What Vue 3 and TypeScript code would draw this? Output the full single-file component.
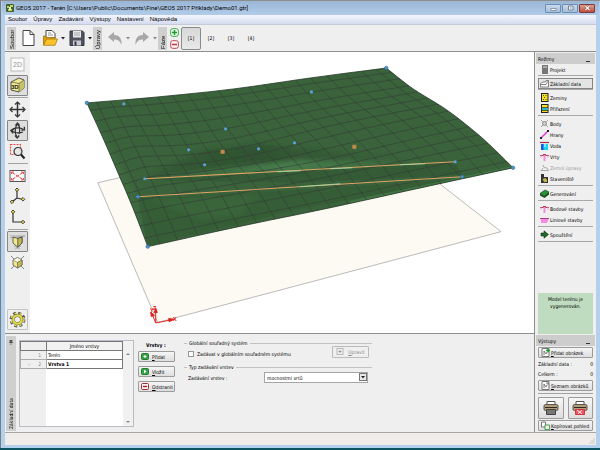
<script setup lang="ts">
import { ref } from 'vue'

type Pt = [number, number]
interface Mode { label: string; icon: string; disabled?: boolean }

const menu = ['Soubor', 'Úpravy', 'Zadávání', 'Výstupy', 'Nastavení', 'Nápověda']
const stages = ['[1]', '[2]', '[3]', '[4]']
const activeStage = ref('[1]')
const activeMode = ref('Základní data')
const globalSystem = ref(false)
const inputKind = ref('mocnostmi vrtů')

const modeGroups: Mode[][] = [
  [{ label: 'Projekt', icon: 'project' }],
  [{ label: 'Základní data', icon: 'data' }],
  [{ label: 'Zeminy', icon: 'soils' }, { label: 'Přiřazení', icon: 'assign' }],
  [
    { label: 'Body', icon: 'points' },
    { label: 'Hrany', icon: 'edges' },
    { label: 'Voda', icon: 'water' },
    { label: 'Vrty', icon: 'bores' },
    { label: 'Zemní úpravy', icon: 'earth', disabled: true },
    { label: 'Staveniště', icon: 'site' },
  ],
  [{ label: 'Generování', icon: 'generate' }],
  [{ label: 'Bodové stavby', icon: 'bores' }, { label: 'Liniové stavby', icon: 'lines' }],
  [{ label: 'Spouštění', icon: 'run' }],
]

const layers = [
  { n: 1, name: 'Terén', current: false },
  { n: 2, name: 'Vrstva 1', current: true },
]

// Terrain surface: a Coons patch over four edge curves with a raised shelf on the left
const COLS = 20
const ROWS = 14
const topEdge: Pt[] = [[86, 103], [157, 97], [233, 89], [310, 78], [386, 68]]
const bottomEdge: Pt[] = [[147, 247], [238, 227], [330, 208], [421, 188], [513, 168]]
const leftEdge: Pt[] = [[86, 103], [102, 138], [118, 175], [132, 208], [147, 247]]
const rightEdge: Pt[] = [[386, 68], [413, 89], [448, 111], [483, 139], [513, 168]]

function along(edge: Pt[], t: number): Pt {
  const s = Math.min(t, 0.99999) * (edge.length - 1)
  const i = Math.floor(s)
  const f = s - i
  const p = (k: number): Pt => edge[Math.max(0, Math.min(edge.length - 1, k))]
  const blend = (a: number, b: number, c: number, d: number) =>
    0.5 * (2 * b + (c - a) * f + (2 * a - 5 * b + 4 * c - d) * f * f + (3 * b - a - 3 * c + d) * f * f * f)
  return [
    blend(p(i - 1)[0], p(i)[0], p(i + 1)[0], p(i + 2)[0]),
    blend(p(i - 1)[1], p(i)[1], p(i + 1)[1], p(i + 2)[1]),
  ]
}

function surface(u: number, v: number): Pt {
  const t = along(topEdge, u)
  const b = along(bottomEdge, u)
  const l = along(leftEdge, v)
  const r = along(rightEdge, v)
  const at = (k: 0 | 1) =>
    (1 - v) * t[k] + v * b[k] + (1 - u) * l[k] + u * r[k] -
    ((1 - u) * (1 - v) * topEdge[0][k] + u * (1 - v) * topEdge[4][k] +
      (1 - u) * v * bottomEdge[0][k] + u * v * bottomEdge[4][k])
  const hump = Math.exp(-(((u - 0.36) / 0.2) ** 2) - ((v - 0.42) / 0.2) ** 2)
  const shelf = Math.exp(-(((u - 0.1) / 0.08) ** 2) - ((v - 0.4) / 0.28) ** 2) * Math.min(1, u * 12)
  const dip = Math.exp(-(((u - 0.62) / 0.25) ** 2) - ((v - 0.64) / 0.12) ** 2)
  return [at(0) + dip * 2, at(1) + hump * 5 - shelf * 4 + dip * 3]
}

const toPath = (pts: Pt[]) => 'M' + pts.map(p => p[0].toFixed(1) + ' ' + p[1].toFixed(1)).join('L')
const steps = (n: number) => Array.from({ length: n + 1 }, (_, i) => i / n)

const meshLines: string[] = []
for (let c = 1; c < COLS; c++) meshLines.push(toPath(steps(40).map(v => surface(c / COLS, v))))
for (let r = 1; r < ROWS; r++) meshLines.push(toPath(steps(40).map(u => surface(u, r / ROWS))))
const mesh = meshLines.join('')

const outline = toPath([
  ...steps(24).map(t => along(topEdge, t)),
  ...steps(24).map(t => along(rightEdge, t)),
  ...steps(24).map(t => along(bottomEdge, 1 - t)),
  ...steps(24).map(t => along(leftEdge, 1 - t)),
]) + 'Z'

const corners: Pt[] = [[86, 103], [386, 68], [513, 168], [147, 247], [462, 177], [137, 197]]
const points: Pt[] = [
  [123, 104], [225, 129], [188, 150], [258, 149], [294, 143], [204, 165],
  [144, 179], [311, 92], [455, 162],
]
const bores: Pt[] = [[222, 152], [354, 147]]
</script>

<template>
  <div class="window">
    <header class="title">
      <svg class="app-icon" viewBox="0 0 8 8"><rect width="8" height="8" rx="1" fill="#46602e" /><path d="M1 2h2v2H1zM4 1h3v2H4zM2 5h4v2H2z" fill="#b6d66c" /><path d="M3 3h2v3H3z" fill="#e9f2c4" /></svg>
      <h1>GEO5 2017 - Terén [C:\Users\Public\Documents\Fine\GEO5 2017 Příklady\Demo01.gtr]</h1>
      <div class="controls">
        <button class="ctl" aria-label="Minimalizovat"><svg viewBox="0 0 15 8"><path d="M5 4.500h5v2H5z" fill="#fff" stroke="#5b6c80" stroke-width=".6" /></svg></button>
        <button class="ctl" aria-label="Maximalizovat"><svg viewBox="0 0 15 8"><path d="M5.500 2h4.500v4H5.500z" fill="#fff" stroke="#5b6c80" stroke-width=".8" /><path d="M7 3.500h1.500v1H7z" fill="#5b6c80" /></svg></button>
        <button class="ctl close" aria-label="Zavřít"><svg viewBox="0 0 15 8"><path d="M5.500 2l4 4M9.500 2l-4 4" stroke="#6c3a36" stroke-width="2.200" /><path d="M5.500 2l4 4M9.500 2l-4 4" stroke="#fff" stroke-width="1.300" /></svg></button>
      </div>
    </header>

    <nav class="menu">
      <a v-for="m in menu" :key="m" href="#">{{ m }}</a>
    </nav>

    <div class="toolbar">
      <span class="grip"><span>Soubor</span></span>
      <button class="tb wide" aria-label="Nový"><svg viewBox="0 0 16 18" width="16" height="18"><path d="M3 1.500h7l4 4v11H3z" fill="#fff" stroke="#444" /><path d="M10 1.500v4h4" fill="none" stroke="#444" /></svg></button>
      <button class="tb" aria-label="Otevřít"><svg viewBox="0 0 16 18" width="16" height="18"><path d="M4 9V1.500h6l3 3V9" fill="#fff" stroke="#444" /><path d="M6 4h3M6 6h5" stroke="#777" stroke-width=".8" /><path d="M1.500 16V7h2l1 1.500H13V10" fill="#e0a010" stroke="#9b7410" stroke-width=".8" /><path d="M1.500 16.300L4.500 10h11L13 16.300z" fill="#fcc32c" stroke="#a87c10" stroke-width=".8" /></svg></button>
      <button class="caret" aria-label="Naposledy otevřené"><svg viewBox="0 0 4 3" width="4" height="3"><path d="M0 0h4L2 2.500z" fill="#222" /></svg></button>
      <button class="tb" aria-label="Uložit"><svg viewBox="0 0 16 18" width="16" height="18"><path d="M1 2h12.500L15 3.500V16.500H1z" fill="#50525e" stroke="#33353f" /><path d="M4 2h8v6.500H4z" fill="#e8e8ec" /><path d="M5 4h6M5 6h6" stroke="#888" stroke-width=".7" /><path d="M4 11.500h8v5H4z" fill="#c9cad2" /><path d="M5.500 12.500h2v4h-2z" fill="#33353f" /></svg></button>
      <button class="caret" aria-label="Uložit jako"><svg viewBox="0 0 4 3" width="4" height="3"><path d="M0 0h4L2 2.500z" fill="#222" /></svg></button>
      <span class="grip"><span>Úpravy</span></span>
      <button class="tb undo" aria-label="Zpět"><svg viewBox="0 0 16 18" width="16" height="18"><path d="M1 8l6-5v3c5 0 8 3 7.500 10C13 12 11 10.500 7 10.500V13z" fill="#a7a7a7" /></svg></button>
      <button class="caret" aria-label="Historie zpět"><svg viewBox="0 0 4 3" width="4" height="3"><path d="M0 0h4L2 2.500z" fill="#888" /></svg></button>
      <button class="tb" aria-label="Znovu"><svg viewBox="0 0 16 18" width="16" height="18"><path d="M15 8L9 3v3C4 6 1 9 1.500 16 3 12 5 10.500 9 10.500V13z" fill="#a7a7a7" /></svg></button>
      <button class="caret" aria-label="Historie znovu"><svg viewBox="0 0 4 3" width="4" height="3"><path d="M0 0h4L2 2.500z" fill="#888" /></svg></button>
      <span class="grip"><span>Fáze</span></span>
      <div class="stage-edit">
        <button aria-label="Přidat fázi"><svg viewBox="0 0 9 9" width="9" height="9"><rect x=".7" y=".7" width="7.600" height="7.600" rx="2" fill="#f4fff4" stroke="#35a344" /><path d="M4.500 2v5M2 4.500h5" stroke="#1f9a32" stroke-width="1.500" /></svg></button>
        <button aria-label="Odebrat fázi"><svg viewBox="0 0 9 9" width="9" height="9"><rect x=".7" y=".7" width="7.600" height="7.600" rx="2" fill="#fff2f2" stroke="#b94a50" /><path d="M2 4.500h5" stroke="#b23a42" stroke-width="1.500" /></svg></button>
      </div>
      <button v-for="s in stages" :key="s" class="stage" :class="{ on: s === activeStage }" @click="activeStage = s">{{ s }}</button>
    </div>

    <div class="body">
      <div class="work">
        <main class="main">
          <div class="tools">
            <button class="tool" aria-label="2D"><svg viewBox="0 0 19 19"><rect x="3" y="3" width="13" height="13" fill="#fafafa" stroke="#bbb" /><text x="5" y="12" class="t2d">2D</text></svg></button>
            <button class="tool on" aria-label="3D"><svg viewBox="0 0 19 19"><path d="M3 6l8-4 5 2v8l-5 4-8-2z" fill="#efe88c" stroke="#444" stroke-width=".9" /><path d="M11 7.500L16 4v8l-5 4z" fill="#c9c060" /><path d="M3 6l8 1.500 5-3.500M11 7.500V16" fill="none" stroke="#555" stroke-width=".7" /><text x="3" y="13" class="t3d">3D</text></svg></button>
            <hr>
            <button class="tool" aria-label="Posun"><svg viewBox="0 0 19 19" class="line"><path d="M9.500 3v13M3 9.500h13" stroke-width="1.500" /><path d="M7 4.500l2.500-2.500L12 4.500M7 14.500l2.500 2.500 2.500-2.500M4.500 7L2 9.500 4.500 12M14.500 7L17 9.500 14.500 12" /></svg></button>
            <button class="tool on" aria-label="Otáčení"><svg viewBox="0 0 19 19" class="line"><path d="M9 16C6.500 13 6.500 6 9.500 3c2.500 2 2.800 7 1.500 10" /><path d="M15.500 8.500C12 6 6 6.500 3 9.500c2.500 2.500 8 3 12 1.500" /><path d="M7 14.500L9.200 17l2-2.500M13.500 9l3-.2-.2-3M7.500 4.500l2-2.500 2 2.500M5 12.500l-2-3 3-1" stroke-width="1.300" /></svg></button>
            <button class="tool" aria-label="Výřez"><svg viewBox="0 0 19 19"><path d="M2.500 2.500h10v10h-10z" fill="none" stroke="#ef4b4b" stroke-width="1.200" stroke-dasharray="2 1" /><circle cx="10" cy="9.500" r="4" fill="#e4e6e6" fill-opacity=".8" stroke="#333" stroke-width="1.200" /><path d="M13 12.500l3.500 4" stroke="#222" stroke-width="2" /></svg></button>
            <hr>
            <button class="tool" aria-label="Zobrazit vše"><svg viewBox="0 0 19 19"><rect x="2" y="4.500" width="15" height="11" fill="#fff" stroke="#555" /><path d="M4 6.500l11 7M15 6.500l-11 7" stroke="#f04a4a" stroke-dasharray="3.500 1" /><path d="M3.500 8V6H6M13 6h2.500v2M3.500 12v2H6M13 14h2.500v-2" fill="none" stroke="#f04a4a" /></svg></button>
            <button class="tool" aria-label="Axonometrie"><svg viewBox="0 0 19 19" class="line nodes"><path d="M9 3v8L4 15M9 11l6 1.500" /><path d="M9 1l1.800 1.800L9 4.600 7.200 2.800zM4 13l1.800 1.800L4 16.600 2.200 14.800zM15 10.500l1.800 1.800L15 14.100l-1.800-1.800z" /></svg></button>
            <button class="tool" aria-label="Půdorys"><svg viewBox="0 0 19 19" class="line nodes"><path d="M5 4v10h10" /><path d="M5 2l1.800 1.800L5 5.600 3.200 3.800zM15 12.200l1.800 1.800-1.800 1.800-1.800-1.800z" /></svg></button>
            <hr>
            <button class="tool on" aria-label="Perspektiva"><svg viewBox="0 0 19 19"><path d="M2 4h15M6 14l6 3M13 14l-6 3M2 6l15-2" stroke="#999" stroke-width=".7" /><path d="M5 5l5 1.500 4-1.500v6l-4.500 4L5 11z" fill="#efe88c" stroke="#444" stroke-width=".8" /><path d="M9.800 6.500V15L14 11V5z" fill="#c3ba55" stroke="#444" stroke-width=".8" /></svg></button>
            <button class="tool" aria-label="Rovnoběžné promítání"><svg viewBox="0 0 19 19"><path d="M3 3l13 13M16 3L3 16" stroke="#777" stroke-width=".9" /><path d="M9.500 4.500L14 7v5l-4.500 3L5 12V7z" fill="#efe88c" stroke="#555" stroke-width=".8" /><path d="M5 7l4.500 2.500L14 7 9.500 4.500z" fill="#fbf8d8" stroke="#777" stroke-width=".6" /><path d="M9.500 9.500V15L14 12V7z" fill="#c3ba55" stroke="#555" stroke-width=".6" /></svg></button>
            <button class="tool boxed" aria-label="Nastavení zobrazení"><svg viewBox="0 0 19 19"><circle cx="9.500" cy="9.500" r="6.400" fill="none" stroke="#555" stroke-width="3" stroke-dasharray="2.900 2.127" /><circle cx="9.500" cy="9.500" r="6.200" fill="none" stroke="#e3da48" stroke-width="1.800" stroke-dasharray="2 3.027" stroke-dashoffset="-.4" /><circle cx="9.500" cy="9.500" r="4.200" fill="#f0f0f0" stroke="#666" stroke-width="3.200" /><circle cx="9.500" cy="9.500" r="4.200" fill="none" stroke="#e3da48" stroke-width="2.200" /></svg></button>
          </div>

          <svg class="scene" viewBox="29 52 505 282" preserveAspectRatio="xMinYMin meet" role="img" aria-label="Model terénu">
            <defs>
              <clipPath id="ground"><path :d="outline" /></clipPath>
              <linearGradient id="dark" x1="0" x2="1"><stop offset="0" stop-color="#2a4a2b" stop-opacity=".4" /><stop offset=".4" stop-color="#2a4a2b" stop-opacity=".6" /><stop offset="1" stop-color="#2a4a2b" stop-opacity="0" /></linearGradient>
              <linearGradient id="light" x1="0" x2="1"><stop offset="0" stop-color="#4b8350" stop-opacity="0" /><stop offset=".45" stop-color="#4b8350" stop-opacity=".8" /><stop offset="1" stop-color="#4b8350" stop-opacity="0" /></linearGradient>
              <filter id="soft" x="-20%" y="-50%" width="140%" height="200%"><feGaussianBlur stdDeviation="2" /></filter>
            </defs>
            <path d="M97 183L360 122 501 232 157 323Z" fill="#fdf9f3" stroke="#aaa" stroke-width=".8" />
            <path :d="outline" fill="#3a633b" />
            <g clip-path="url(#ground)">
              <path d="M86 103L137 197 147 247 130 225 80 110Z" fill="#467447" opacity=".4" filter="url(#soft)" />
              <path d="M144 177L205 150 260 144 340 152 420 161 300 163 210 170Z" fill="url(#dark)" filter="url(#soft)" />
              <path d="M150 178L230 167 300 160 400 162 450 162 300 171Z" fill="url(#light)" filter="url(#soft)" />
              <path d="M144 180L455 163 462 175 300 183Z" fill="#2d5430" opacity=".5" />
              <path d="M137 199L300 190 462 179 300 209 147 246Z" fill="#315a32" opacity=".5" />
              <path d="M150 200L260 195 240 215 200 220Z" fill="#437346" opacity=".35" filter="url(#soft)" />
              <path d="M350 201L513 166v3L350 206z" fill="#4a874e" opacity=".5" />
              <path :d="mesh" fill="none" stroke="#353b37" stroke-opacity=".85" stroke-width=".7" />
            </g>
            <path :d="outline" fill="none" stroke="#26382a" stroke-width=".8" />
            <path d="M144 179L455 162M137 197L462 177" stroke="#dfa466" stroke-width="1.100" />
            <path d="M277 172L300 171M330 169L352 168M400 165L425 164M300 187L340 184" stroke="#a5ddb0" stroke-width=".8" />
            <rect v-for="(p, i) in bores" :key="'b' + i" :x="p[0] - 2" :y="p[1] - 2" width="4" height="4" fill="#c08a4d" />
            <circle v-for="(p, i) in points" :key="'p' + i" :cx="p[0]" :cy="p[1]" r="1.600" fill="#57a3d6" />
            <circle v-for="(p, i) in corners" :key="'c' + i" :cx="p[0]" :cy="p[1]" r="1.800" fill="#4c94c6" stroke="#285a86" stroke-width=".5" />
            <g class="axes">
              <path d="M155 323.500V311M155 323.500L170 320.500M155 323.500L151.500 315" />
              <path d="M153.500 313L155 308.500 156.500 313zM168 319l5 1-4.500 2.200zM150.500 317L150 312.500 153.500 316z" fill="#e0201c" />
              <text x="172" y="322">X</text><text x="149" y="313">Y</text><text x="152" y="311">Z</text>
            </g>
          </svg>
        </main>

        <section class="panel">
          <div class="side-grip"><svg viewBox="0 0 4 5" width="4" height="5"><path d="M1 0h2v2.500H1zM0 2.500h4M2 2.500V5" fill="#555" stroke="#555" stroke-width=".7" /></svg><span>Základní data</span></div>
          <div class="grid-box">
            <table>
              <thead><tr><th class="num"></th><th>Jméno vrstvy</th></tr></thead>
              <tbody>
                <tr v-for="l in layers" :key="l.n" :class="{ current: l.current }">
                  <td class="num"><i>{{ l.current ? '›' : '' }}</i>{{ l.n }}</td><td>{{ l.name }}</td>
                </tr>
              </tbody>
            </table>
            <div class="scroll">
              <svg viewBox="0 0 4 2" width="4" height="2"><path d="M0 2h4L2 0z" fill="#888" /></svg>
              <svg viewBox="0 0 4 2" width="4" height="2"><path d="M0 0h4L2 2z" fill="#888" /></svg>
            </div>
          </div>
          <div class="layer-actions">
            <strong>Vrstvy :</strong>
            <button class="btn"><svg viewBox="0 0 8 7"><rect x=".5" y=".5" width="7" height="6" rx="1" fill="#35a344" stroke="#237a30" /><path d="M4 2v3M2.500 3.500h3" stroke="#fff" /></svg><span><u>P</u>řidat</span></button>
            <button class="btn"><svg viewBox="0 0 8 7"><rect x=".5" y=".5" width="7" height="6" rx="1" fill="#35a344" stroke="#237a30" /><path d="M3 1.500l2.500 2L3 5.500z" fill="#fff" /></svg><span><u>V</u>ložit</span></button>
            <button class="btn"><svg viewBox="0 0 8 7"><rect x=".5" y=".5" width="7" height="6" rx="1" fill="#fbeeee" stroke="#9c2f38" /><path d="M2 3.500h4" stroke="#9c1f2a" stroke-width="1.300" /></svg><span><u>O</u>dstranit</span></button>
          </div>
          <form class="settings" @submit.prevent>
            <fieldset>
              <legend>Globální souřadný systém</legend>
              <div class="line-row">
                <input id="glob" v-model="globalSystem" type="checkbox">
                <label for="glob">Zadávat v globálním souřadném systému</label>
                <button type="button" class="btn edit" disabled><svg viewBox="0 0 8 7"><rect x="1" y=".5" width="6" height="6" fill="#f4f4f4" stroke="#aaa" stroke-width=".8" /><path d="M4 2v3M2.500 3.500h3" stroke="#888" stroke-width=".8" /></svg><span><u>U</u>pravit</span></button>
              </div>
            </fieldset>
            <fieldset>
              <legend>Typ zadávání vrstev</legend>
              <div class="line-row">
                <label for="kind" class="kind-label">Zadávání vrstev :</label>
                <div class="select">
                  <select id="kind" v-model="inputKind"><option>mocnostmi vrtů</option><option>body</option></select>
                  <svg viewBox="0 0 8 8" width="8" height="8"><rect x=".5" y=".5" width="7" height="7" fill="#e8e8e8" stroke="#777" /><path d="M2 3h4L4 5.500z" fill="#222" /></svg>
                </div>
              </div>
            </fieldset>
          </form>
        </section>
      </div>

      <aside class="sidebar">
        <h2>Režimy<i></i></h2>
        <div class="modes">
          <div v-for="(g, gi) in modeGroups" :key="gi" class="group">
            <button v-for="m in g" :key="m.label" class="mode" :class="{ on: m.label === activeMode }" :disabled="m.disabled" @click="activeMode = m.label">
              <svg viewBox="0 0 9 9" width="9" height="9">
                <g v-if="m.icon === 'project'"><rect x="2" width="6" height="9" fill="#777" /><path d="M3 2h4" stroke="#ddd" /></g>
                <g v-else-if="m.icon === 'data'" fill="#fff" stroke="#555" stroke-width=".7"><path d="M.5 8V4.500L3 3h2.500L6 1.500h2.500V8z" /><path d="M1 5.500h5L8 2" fill="none" /></g>
                <g v-else-if="m.icon === 'soils'"><rect x="1.500" y=".5" width="6.500" height="8" fill="#f6e02a" stroke="#222" /><path d="M3 2.500h1M5.500 2.500h1M4 4.500h1M3 6.500h1M5.500 6.500h1" stroke="#554c00" /></g>
                <g v-else-if="m.icon === 'assign'"><rect x="1.500" y=".5" width="6.500" height="8" fill="#f6e02a" stroke="#222" /><path d="M2 4h6v2H2z" fill="#2fb6c4" /><path d="M2 3.500h6M2 6.500h6" stroke="#222" stroke-width=".7" /></g>
                <g v-else-if="m.icon === 'points'"><path d="M1 1l7 7M8 1L1 8" stroke="#888" stroke-width=".7" /><circle cx="4.500" cy="4.500" r="2" fill="#ccc" stroke="#777" stroke-width=".7" /></g>
                <g v-else-if="m.icon === 'edges'"><path d="M1 8l7-7" stroke="#e531d4" stroke-width="1.500" /><path d="M0 7h2v2H0zM7 0h2v2H7z" fill="#222" /></g>
                <g v-else-if="m.icon === 'water'"><path d="M1 3h7v6H1z" fill="#16d3f2" /><path d="M1 3h2.500v6H1z" fill="#1d55e0" /><path d="M0 1.500h9" stroke="#b32844" stroke-width="1.200" /><path d="M5 3v3" stroke="#fff" /></g>
                <g v-else-if="m.icon === 'bores'"><path d="M0 3.500h9" stroke="#b03c5c" /><path d="M3.500 2.500h2V9h-2z" fill="#f48ad8" /><path d="M1 3v3M8 3v3" stroke="#dc9abc" stroke-width=".7" /><path d="M3 2.500h3" stroke="#b03c5c" /></g>
                <g v-else-if="m.icon === 'earth'" fill="none" stroke="#aaa"><path d="M1 7.500h7.500L7 5 4 4.500 3 2M1 7.500L3 5" /></g>
                <g v-else-if="m.icon === 'site'"><path d="M1 0h3v3h4v6H1z" fill="#333" /><path d="M2.500 5l3-1 1.500 2v2H4z" fill="#c7b84a" /></g>
                <g v-else-if="m.icon === 'generate'"><path d="M0 4.500L5 1l4 2-4 4z" fill="#2d9138" stroke="#14501c" stroke-width=".7" /><path d="M0 4.500v2L4.500 9 9 5.500V3L4.500 7z" fill="#174f1e" /></g>
                <g v-else-if="m.icon === 'lines'"><path d="M1 3h8L7 8H1z" fill="#f78be4" /><path d="M0 3.500h9" stroke="#b03c7c" /></g>
                <path v-else d="M1 3h3V.8L8.500 4.500 4 8.200V6H1z" fill="#1f6b27" stroke="#111" stroke-width=".5" />
              </svg>
              <span>{{ m.label }}</span>
            </button>
          </div>
        </div>
        <p class="message">Model terénu je vygenerován.</p>
        <h2>Výstupy<i></i></h2>
        <div class="outputs">
          <button class="btn out"><svg viewBox="0 0 9 9"><path d="M1 .5h7v8H1z" fill="#f8f8f8" stroke="#777" /><path d="M3 7V3l2 3 1-2" fill="none" stroke="#555" stroke-width=".7" /><path d="M5 2.500h4M7 .5v4" stroke="#1f9a32" stroke-width="1.300" /></svg><span><u>P</u>řidat obrázek</span></button>
          <dl><dt>Základní data :</dt><dd>0</dd><dt>Celkem :</dt><dd>0</dd></dl>
          <button class="btn out"><svg viewBox="0 0 9 9"><path d="M1 .5h7v8H1z" fill="#f8f8f8" stroke="#777" /><path d="M3 7V3l2 3 1-2M5 2h3M6 3h2" fill="none" stroke="#555" stroke-width=".7" /></svg><span><u>S</u>eznam obrázků</span></button>
          <hr>
          <div class="prints">
            <button class="btn" aria-label="Tisk"><svg viewBox="0 0 16 16" width="16" height="16"><path d="M4 6V1.500h8V6" fill="#fff" stroke="#555" /><rect x="1" y="4.500" width="14" height="6" rx="1.500" fill="#b39c7a" stroke="#5c5448" /><path d="M2 7.500h12" stroke="#2e2b27" /><path d="M3.500 9.500h9v5h-9z" fill="#777" stroke="#444" /></svg></button>
            <button class="btn" aria-label="Tisk do PDF"><svg viewBox="0 0 16 16" width="16" height="16"><path d="M4 6V1.500h8V6" fill="#fff" stroke="#555" /><rect x="1" y="4.500" width="14" height="6" rx="1.500" fill="#b39c7a" stroke="#5c5448" /><path d="M2 7.500h12" stroke="#2e2b27" /><path d="M3.500 9.500h9v5h-9z" fill="#ee5560" stroke="#d63440" /><path d="M5 10l5 4M6 13.500l4-3" stroke="#fff" stroke-width=".9" /></svg></button>
          </div>
          <button class="btn out"><svg viewBox="0 0 9 9"><path d="M.5 1h4v5h-4z" fill="#fff" stroke="#555" stroke-width=".8" /><path d="M4 4h4.500v4.500H4z" fill="#e8f4e8" stroke="#2c8a3b" stroke-width=".8" /></svg><span><u>K</u>opírovat pohled</span></button>
        </div>
      </aside>
    </div>

    <footer class="status"><svg viewBox="0 0 6 6" width="6" height="6"><path d="M5 1v0M5 3v0M3 3v0M5 5v0M3 5v0M1 5v0" stroke="#aaa" stroke-linecap="square" /></svg></footer>
  </div>
</template>

<style>
body { margin: 0; background: #0d5462; }
</style>

<style scoped>
* { box-sizing: border-box; }
.window {
  display: flex;
  flex-direction: column;
  min-height: calc(100vh - 2px);
  padding: 0 4px 3px;
  border-top: 1px solid #8d8d8d;
  border-left: 1px solid #757d86;
  background: #b5d0ec;
  font: 5px/8px "DejaVu Sans Condensed", "DejaVu Sans", Tahoma, sans-serif;
  color: #000;
}
button, select, input { font: inherit; color: inherit; }
button { display: flex; align-items: center; justify-content: center; padding: 0; border: 0; background: none; }
button svg { flex: none; }

.title { display: flex; align-items: center; height: 14px; margin: 0 -3px; padding: 0 4px; background: linear-gradient(#9ab6d5, #b2cce8); }
.app-icon { width: 8px; height: 8px; margin-right: 2px; }
h1 { flex: 1; margin: 0; font: 6px/8px Roboto, "Liberation Sans", sans-serif; white-space: nowrap; }
.controls { display: flex; gap: 1px; }
.ctl { width: 16px; height: 9px; border: 1px solid #6f8db0; border-radius: 1px; background: linear-gradient(#c8daee, #a4bedb); }
.ctl svg { width: 15px; height: 8px; }
.close { border-color: #7c3b3a; background: linear-gradient(#dfa191, #c14a37); }

.menu { display: flex; gap: 6px; height: 10px; padding: 0 3px; border-bottom: 1px solid #c4cadc; background: linear-gradient(#f4f6fc, #d5dcf0); font: 6px/9px "Liberation Sans", Arial, sans-serif; }
.menu a { color: inherit; text-decoration: none; }

.toolbar { display: flex; align-items: center; height: 27px; padding-left: 2px; border-bottom: 1px solid #8f8f8f; background: #efefef; }
.grip { display: flex; align-items: flex-start; justify-content: center; width: 9px; height: 23px; background: #cfcfcf; }
.grip span { writing-mode: vertical-rl; transform: rotate(180deg); width: 8px; height: 23px; padding-top: 1px; text-align: left; font: 6px/8px "Liberation Sans", Arial, sans-serif; }
.tb { width: 21px; height: 23px; }
.tb.wide { width: 23px; }
.tb svg { width: 16px; height: 18px; }
.caret { width: 6px; height: 20px; }
.undo { margin-left: 2px; }
.stage-edit { display: flex; flex-direction: column; gap: 3px; width: 14px; align-items: center; }
.stage { width: 20px; height: 23px; border: 1px solid transparent; border-radius: 2px; }
.stage.on { border-color: #8a8a8a; background: linear-gradient(#d8d8d8, #e9e9e9); }

.body { display: flex; flex: 1; min-height: 0; background: #efefef; }
.work { display: flex; flex: 1; flex-direction: column; min-width: 0; border-right: 1px solid #8f8f8f; }
.main { display: flex; flex: 1; background: #fff; }
.scene { flex: 1; min-width: 0; width: 100%; }

.tools { display: flex; flex-direction: column; align-items: center; width: 25px; padding: 2px 0 3px; background: #efefef; }
.tools hr { width: 20px; margin: 1px 0; }
hr { height: 1px; border: 0; background: #a3a3a3; }
.tool { width: 21px; height: 21px; border: 1px solid transparent; border-radius: 1px; }
.tool svg { width: 19px; height: 19px; }
.tool.on { border-color: #858585; background: #dedede; }
.tool.boxed { margin-top: auto; border-color: #c4c4c4; }
.line { fill: none; stroke: #333; stroke-width: 1.2; }
.nodes path:last-child { fill: #e6dc4a; stroke-width: .9; }
.t2d, .t3d { font: 7px "Liberation Sans", sans-serif; fill: #999; }
.t3d { font-weight: 700; fill: #222; font-size: 6px; }
.axes { fill: none; stroke: #e0201c; stroke-width: 1; }
.axes text { font: bold 6px "Liberation Sans", sans-serif; fill: #e0201c; stroke: none; }

.panel { display: flex; height: 99px; padding: 2px 0 1px 1px; border-top: 1px solid #8f8f8f; background: #efefef; }
.side-grip { display: flex; flex-direction: column; align-items: center; justify-content: space-between; width: 10px; margin-right: 3px; padding: 4px 0 2px; background: #cfcfcf; }
.side-grip span { writing-mode: vertical-rl; transform: rotate(180deg); }
.grid-box { display: flex; width: 115px; height: 87px; margin-top: 4px; border: 1px solid #b9bcc2; background: linear-gradient(90deg, #efefef 26px, #fff 26px); }
table { flex: 1; align-self: flex-start; border-collapse: collapse; table-layout: fixed; width: 103px; }
th, td { height: 9px; padding: 0 1px; border: 1px solid #777; font-weight: 400; text-align: left; line-height: 7px; }
th { background: #f2f2f2; text-align: center; }
.num { width: 26px; padding-right: 5px; background: #efefef; color: #888; text-align: right; }
td.num { border-color: #aaa; }
.num i { margin-right: 8px; font-style: normal; }
.current td:last-child { font-weight: 700; }
.scroll { display: flex; flex-direction: column; align-items: center; justify-content: space-between; width: 10px; padding: 12px 0 3px; background: #f1f1f1; }
.layer-actions { display: flex; flex-direction: column; gap: 4px; width: 37px; margin: 5px 0 0 4px; }
.layer-actions strong { margin-bottom: -2px; padding-left: 8px; }
.layer-actions .btn { justify-content: flex-start; gap: 3px; }
.btn { height: 11px; gap: 2px; padding: 0 2px; border: 1px solid #9b9b9b; border-radius: 1px; background: linear-gradient(#f6f6f6, #dedede); white-space: nowrap; }
.btn svg { width: 8px; height: 7px; }
.btn:disabled { color: #8a8a8a; border-color: #bbb; background: #efefef; }
.settings { width: 188px; margin: 3px 0 0 9px; }
fieldset { min-width: 0; height: 24px; margin: 0; padding: 0; border: 0; border-top: 1px solid #c2c2c2; }
legend { margin-left: 3px; padding: 0 2px; }
.line-row { display: flex; align-items: center; height: 11px; padding-left: 4px; margin-top: 1px; }
input[type="checkbox"] { appearance: none; width: 6px; height: 6px; margin: 0 3px 0 0; border: 1px solid #999; background: #fff; }
input[type="checkbox"]:checked { background: #3a6ea5; }
.edit { width: 37px; height: 12px; margin: -4px 3px 0 auto; padding: 0 3px; gap: 4px; }
.kind-label { width: 76px; }
.select { position: relative; width: 104px; }
select { display: block; appearance: none; width: 100%; height: 11px; padding: 0 10px 0 2px; border: 1px solid #a5a5a5; border-radius: 0; background: #fff; }
.select svg { position: absolute; top: 1px; right: 1px; pointer-events: none; }

.sidebar { display: flex; flex-direction: column; width: 61px; padding: 1px 1px 0; background: #efefef; }
h2 { display: flex; align-items: flex-end; justify-content: space-between; height: 11px; margin: 0; padding: 0 5px 1px 2px; background: #cdcdcd; font-size: 5px; font-weight: 400; }
h2 i { width: 4px; height: 1px; margin-bottom: 1px; background: #333; }
.modes { padding: 0 2px; }
.group { padding-bottom: 1px; margin-bottom: 2px; border-bottom: 1px solid #a8a8a8; }
.group:nth-child(-n+2) { padding-bottom: 0; }
.mode { justify-content: flex-start; gap: 1px; width: 100%; height: 11px; padding: 0 1px; border: 1px solid transparent; white-space: nowrap; }
.mode.on { border-color: #858585; background: #e4e4e4; }
.mode:disabled { color: #999; }
.message { height: 41px; margin: auto 2px 1px; padding: 3px 6px; background: #c0dcc0; text-align: center; line-height: 7px; }
.outputs { display: flex; flex-direction: column; padding: 1px 2px; }
.out { justify-content: flex-start; gap: 1px; }
.out svg { width: 9px; height: 9px; }
dl { display: grid; grid-template-columns: 1fr auto; margin: 1px 0; line-height: 10px; }
dt, dd { margin: 0; }
.outputs hr { width: 100%; margin: 2px 0 3px; }
.prints { display: flex; gap: 4px; margin-bottom: 1px; }
.prints .btn { flex: 1; height: 22px; }
.prints .btn svg { width: 16px; height: 16px; }

.status { display: flex; align-items: flex-end; justify-content: flex-end; height: 13px; padding: 1px; border-top: 1px solid #a6a6a6; background: #f0ecea; }
</style>
